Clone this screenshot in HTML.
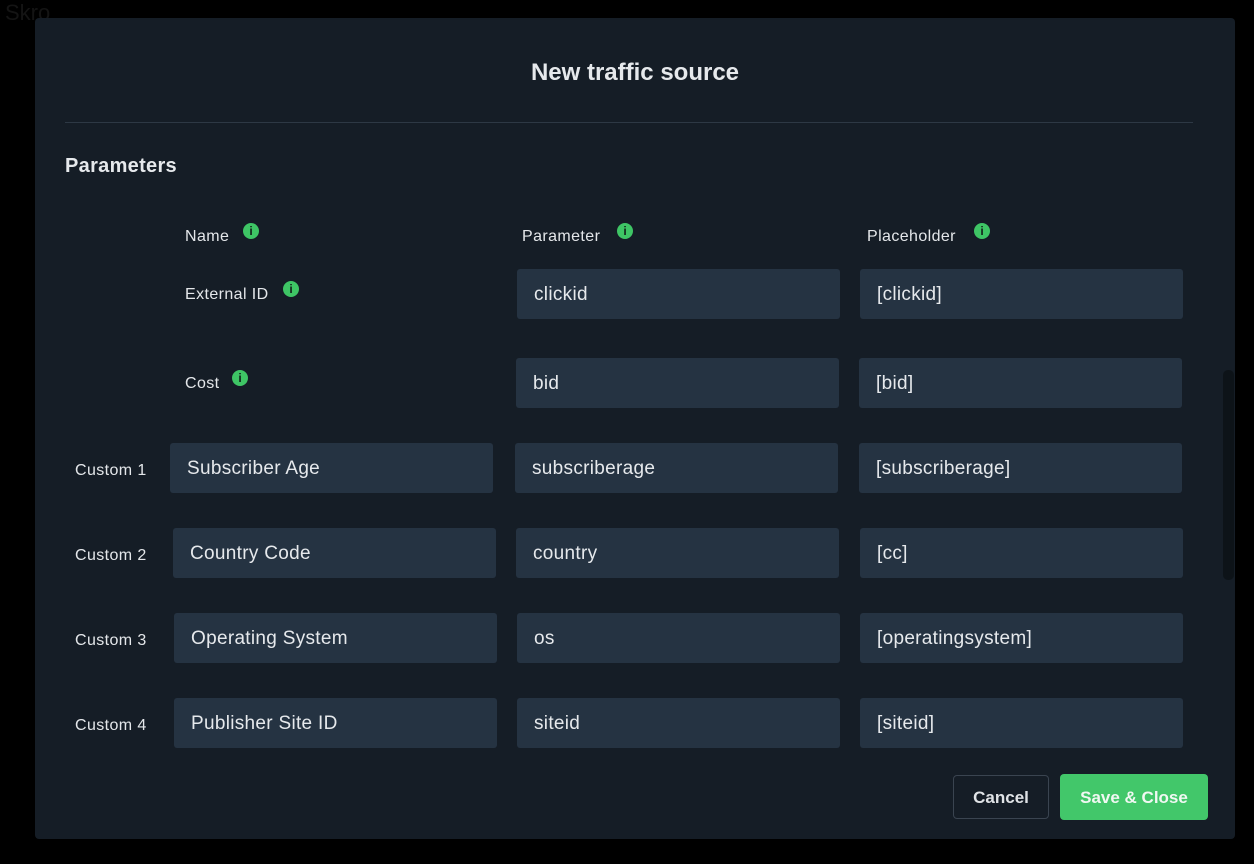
<!DOCTYPE html>
<html><head><style>
body{margin:0;width:1254px;height:864px;background:#000;font-family:"Liberation Sans",sans-serif;position:relative;overflow:hidden}
.a{position:absolute}
.m{left:35px;top:18px;width:1200px;height:821px;background:#151d26;border-radius:4px}
.i{position:absolute;width:323px;height:50px;background:#253342;border-radius:3px;color:#e6e9ec;font-size:19px;letter-spacing:0.3px;line-height:52px;padding-left:17px;box-sizing:border-box}
.l{position:absolute;color:#e4e7ea;font-size:16px;letter-spacing:0.4px}
.dot{position:absolute;width:16px;height:16px;border-radius:50%;background:#3ec565;color:#12201a;font-size:12px;font-weight:bold;text-align:center;line-height:16px}
</style></head><body>
<div class="a" style="left:5px;top:0;color:#141414;font-size:22px">Skro</div>
<div class="a m"></div>
<div class="a" style="left:35px;top:59px;width:1200px;text-align:center;color:#e6e9ec;font-size:24px;font-weight:bold">New traffic source</div>
<div class="a" style="left:65px;top:122px;width:1128px;height:1px;background:#2d3844"></div>
<div class="a" style="left:65px;top:155px;color:#e6e9ec;font-size:20px;font-weight:bold;letter-spacing:0.3px">Parameters</div>
<div class="a" style="left:1223px;top:370px;width:11px;height:210px;background:#0d1318;border-radius:5px"></div>

<div class="l" style="left:185px;top:228px">Name</div><div class="dot" style="left:243px;top:223px">i</div>
<div class="l" style="left:522px;top:228px">Parameter</div><div class="dot" style="left:617px;top:223px">i</div>
<div class="l" style="left:867px;top:228px">Placeholder</div><div class="dot" style="left:974px;top:223px">i</div>

<div class="l" style="left:185px;top:286px">External ID</div><div class="dot" style="left:283px;top:281px">i</div>
<div class="i" style="left:517px;top:269px">clickid</div><div class="i" style="left:860px;top:269px">[clickid]</div>

<div class="l" style="left:185px;top:375px">Cost</div><div class="dot" style="left:232px;top:370px">i</div>
<div class="i" style="left:516px;top:358px">bid</div><div class="i" style="left:859px;top:358px">[bid]</div>

<div class="l" style="left:75px;top:462px">Custom 1</div>
<div class="i" style="left:170px;top:443px">Subscriber Age</div><div class="i" style="left:515px;top:443px">subscriberage</div><div class="i" style="left:859px;top:443px">[subscriberage]</div>

<div class="l" style="left:75px;top:547px">Custom 2</div>
<div class="i" style="left:173px;top:528px">Country Code</div><div class="i" style="left:516px;top:528px">country</div><div class="i" style="left:860px;top:528px">[cc]</div>

<div class="l" style="left:75px;top:632px">Custom 3</div>
<div class="i" style="left:174px;top:613px">Operating System</div><div class="i" style="left:517px;top:613px">os</div><div class="i" style="left:860px;top:613px">[operatingsystem]</div>

<div class="l" style="left:75px;top:717px">Custom 4</div>
<div class="i" style="left:174px;top:698px">Publisher Site ID</div><div class="i" style="left:517px;top:698px">siteid</div><div class="i" style="left:860px;top:698px">[siteid]</div>

<div class="a" style="left:953px;top:775px;width:96px;height:44px;box-sizing:border-box;border:1px solid #3a4450;border-radius:4px;color:#e0e3e6;font-size:17px;font-weight:bold;text-align:center;line-height:44px">Cancel</div>
<div class="a" style="left:1060px;top:774px;width:148px;height:46px;background:#42c76a;border-radius:4px;color:#f0f8f2;font-size:17px;font-weight:bold;text-align:center;line-height:48px">Save &amp; Close</div>
</body></html>
